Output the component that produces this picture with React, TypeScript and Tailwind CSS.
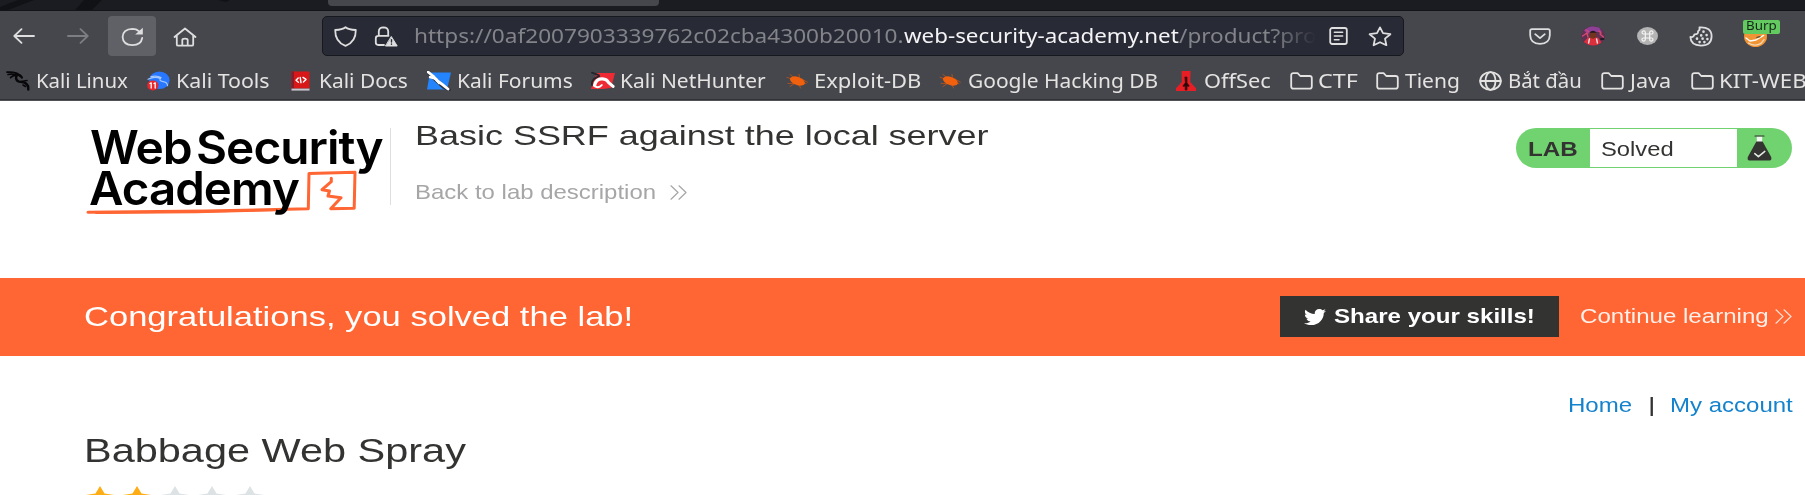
import { useLayoutEffect, useRef, useState } from "react";
import type { ReactNode } from "react";
import { FaTwitter } from "react-icons/fa";

/** Single-line text stretched horizontally to fill the width given by its class. */
function Fit({ className, children }: { className: string; children: ReactNode }) {
  const outer = useRef<HTMLSpanElement>(null);
  const inner = useRef<HTMLSpanElement>(null);
  const [k, setK] = useState(1);
  useLayoutEffect(() => {
    if (outer.current && inner.current && inner.current.offsetWidth) {
      setK(outer.current.getBoundingClientRect().width / inner.current.offsetWidth);
    }
  }, []);
  return (
    <span ref={outer} className={`block shrink-0 whitespace-nowrap ${className}`}>
      <span ref={inner} className="inline-block origin-left" style={{ transform: `scaleX(${k})` }}>
        {children}
      </span>
    </span>
  );
}

function Ico({ className, box, children }: { className: string; box: string; children: ReactNode }) {
  return (
    <svg
      className={`block shrink-0 ${className}`}
      viewBox={box}
      preserveAspectRatio="none"
      fill="none"
      stroke="currentColor"
      strokeWidth="1.8"
      strokeLinecap="round"
      strokeLinejoin="round"
    >
      {children}
    </svg>
  );
}

const Folder = () => (
  <Ico className="h-[18px] w-[23px]" box="0 0 23 18">
    <path d="M1.2 14.5V3.2Q1.2 1.2 3.4 1.2H7.6L10.3 4H19.6Q21.8 4 21.8 6V14.5Q21.8 16.7 19.6 16.7H3.4Q1.2 16.7 1.2 14.5Z" />
  </Ico>
);

const Globe = () => (
  <Ico className="h-5 w-[23px]" box="0 0 23 20">
    <ellipse cx="11.5" cy="10" rx="10.3" ry="8.8" />
    <ellipse cx="11.5" cy="10" rx="5" ry="8.8" />
    <path d="M1.2 10H21.8" />
  </Ico>
);

const Dragon = () => (
  <Ico className="h-5 w-6" box="0 0 24 20">
    <g stroke="#08080a">
      <path d="M1 1.2Q6 .6 11 2.4L14 5" strokeWidth="1.8" />
      <path d="M2 3.6Q6 2.4 10 4.2M4.5 6.6Q7 4 11 4.6" strokeWidth="1.6" />
      <path d="M10 3.4Q14.5 3.6 15.8 6.6M10.5 4.5Q9 9.4 13 10.6L17.5 11.4Q22.5 12.6 22.3 18.6" strokeWidth="2.4" />
      <path d="M19 12.4L22.6 15M15 10.4L21 9.6M17 14L19.5 15.5" strokeWidth="1.5" />
    </g>
  </Ico>
);

const Tools = () => (
  <Ico className="h-5 w-6" box="0 0 24 20">
    <ellipse cx="12.4" cy="9.2" rx="10.2" ry="8.8" fill="#2777ff" stroke="none" />
    <path d="M1 8.2Q8 5 13 7.4M4 5.6Q10 4.2 14 6.6Q11 10 16 10.6Q20 11 20.6 14.6" stroke="#a5c9ff" strokeWidth="1.2" />
    <ellipse cx="5.8" cy="14.4" rx="5.6" ry="5" fill="#e8262b" stroke="none" />
    <path d="M3 12.5L4.2 11.9V17M7 12.5L8.2 11.9V17" stroke="#fff" strokeWidth="1.3" />
  </Ico>
);

const Docs = () => (
  <Ico className="ml-px h-5 w-[19px]" box="0 0 19 20">
    <path d="M.5.5H18.5V17.5H.5Z" fill="#d81818" stroke="none" />
    <path d="M.5.5H3V17.5H.5Z" fill="#841c2b" stroke="none" />
    <path d="M.5 17.6H18.5V19.6H.5Z" fill="#c9c3cb" stroke="none" />
    <path d="M7.2 7L5 9.3L7.4 11.2M9.2 6.5L10 11.7M12 6.4L15 8.4L12.4 11" stroke="#fff" strokeWidth="1.4" />
  </Ico>
);

const Forums = () => (
  <Ico className="h-5 w-6" box="0 0 24 20">
    <path d="M3 1.6H24L20 18.6H0Z" fill="#2384fb" stroke="none" />
    <path d="M1 1.5L8 8.2L16.5 15.8L22 18.6" stroke="#2b2f38" strokeWidth="3.6" />
    <path d="M1 1L6 5L10 9.5L15.6 13.6L21 18" stroke="#fff" strokeWidth="2.8" />
    <path d="M3 6L9 7.8L12 12" stroke="#fff" strokeWidth="2.4" />
  </Ico>
);

const NetHunter = () => (
  <Ico className="h-5 w-6" box="0 0 24 20">
    <path d="M6 2H24L20 17L12 18H0L3 8Z" fill="#ee2b35" stroke="none" />
    <path d="M1 1.6L8 4.4M1 14Q0 8 8 5.4" stroke="#25262b" strokeWidth="1.8" />
    <path d="M3.6 14.4Q5 7.4 11.4 7.8Q16 8 17.4 11.4L22 15.4" stroke="#fff" strokeWidth="3.2" />
    <path d="M4 15.4Q8 17.6 10.8 14" stroke="#fff" strokeWidth="2" />
  </Ico>
);

const Bug = () => (
  <Ico className="h-[18px] w-6" box="0 0 24 18">
    <path d="M2 5.4L21 11.6M5 2.5L12 8M14 2.4L14.8 9M3 11.4H11M5 14.4L12 10M13 11L15.6 16M17 7L22.4 10.2" stroke="#a9501e" strokeWidth="1" />
    <ellipse cx="12.4" cy="9" rx="7.8" ry="4.1" transform="rotate(20 12.4 9)" fill="#f1600c" stroke="none" />
  </Ico>
);

const OffSec = () => (
  <Ico className="ml-px h-5 w-5" box="0 0 20 20">
    <path d="M5.6 0H14.6L14.2 11L20 17.2V20H0V17.2L5.8 11Z" fill="#e81e25" stroke="none" />
    <path d="M9.2 6H11V12L13 14.4V15.4L11 15V19H9.2V15L7.2 15.4V14.4L9.2 12Z" fill="#24080b" stroke="#4c0a0e" strokeWidth=".8" />
  </Ico>
);

const bookmarks = [
  { label: "Kali Linux", icon: <Dragon />, item: "w-[140.5px]", slot: "w-[30px]", text: "w-[92px]" },
  { label: "Kali Tools", icon: <Tools />, item: "w-[143px]", slot: "w-[29.5px]", text: "w-[94px]" },
  { label: "Kali Docs", icon: <Docs />, item: "w-[137px]", slot: "w-[29px]", text: "w-[89px]" },
  { label: "Kali Forums", icon: <Forums />, item: "w-[164px]", slot: "w-[30px]", text: "w-[116px]" },
  { label: "Kali NetHunter", icon: <NetHunter />, item: "w-[194px]", slot: "w-[29.5px]", text: "w-[146px]" },
  { label: "Exploit-DB", icon: <Bug />, item: "w-[153.5px]", slot: "w-[29px]", text: "w-[107px]" },
  { label: "Google Hacking DB", icon: <Bug />, item: "w-[236.5px]", slot: "w-[29.5px]", text: "w-[190px]" },
  { label: "OffSec", icon: <OffSec />, item: "w-[115px]", slot: "w-[29px]", text: "w-[67px]" },
  { label: "CTF", icon: <Folder />, item: "w-[86.5px]", slot: "w-[28px]", text: "w-[39.5px]" },
  { label: "Tieng", icon: <Folder />, item: "w-[102.5px]", slot: "w-[28.5px]", text: "w-[55px]" },
  { label: "Bắt đầu", icon: <Globe />, item: "w-[122px]", slot: "w-[29px]", text: "w-[74px]" },
  { label: "Java", icon: <Folder />, item: "w-[90px]", slot: "w-[29.5px]", text: "w-[41px]" },
  { label: "KIT-WEB", icon: <Folder />, item: "w-[125px]", slot: "w-[28px]", text: "w-[88px]" },
];

function TabStrip() {
  return (
    <div className="flex h-[11px] items-start border-b border-[#131418] bg-[#1b1c21]">
      <svg className="h-[10px] w-[328px]" viewBox="0 0 328 10" preserveAspectRatio="none">
        <path d="M0 10V7L18 0H34L8 10ZM75 10L84 0H102L92 10ZM218 0H230L226 2Z" fill="#111216" />
      </svg>
      <div className="h-[5.5px] w-[331px] rounded-b bg-[#45474d]" />
    </div>
  );
}

function Toolbar() {
  return (
    <div className="flex h-[50px] items-center bg-[#45474d] pl-[13px] text-[#dededf]">
      <Ico className="h-4 w-[22px]" box="0 0 22 16">
        <path d="M21 8H1.5M8.5 1.2L1.3 8L8.5 14.8" />
      </Ico>
      <Ico className="ml-8 h-4 w-[22px] text-[#7d7e83]" box="0 0 22 16">
        <path d="M1 8H20.5M13.5 1.2L20.7 8L13.5 14.8" />
      </Ico>
      <div className="ml-[19px] flex h-10 w-12 items-center justify-center rounded bg-[#606166]">
        <Ico className="mt-px h-5 w-[23px]" box="0 0 23 20">
          <path d="M17.7 4Q15.3 1.8 11.5 1.8Q1.8 2.2 1.6 10Q2 18 11.5 18.2Q20 18 21.2 11" />
          <path d="M21.8.8V7.6H14.2Z" fill="currentColor" stroke="none" />
        </Ico>
      </div>
      <Ico className="mt-px ml-[17px] h-5 w-6" box="0 0 24 20">
        <path d="M1.5 10L12 1.5L22.5 10M3.8 8.4V17.4Q3.8 18.7 5.2 18.7H18.8Q20.2 18.7 20.2 17.4V8.4M9.3 18.5V13Q9.3 11.6 12 11.6T14.7 13V18.5" />
      </Ico>
      <div className="ml-[125px] flex h-10 w-[1082px] shrink-0 items-center rounded-[5px] border border-[#17181e] bg-[#282a36] pl-[11px] font-['Noto_Sans',sans-serif] text-[19.6px] text-[#83848a]">
        <Ico className="h-[21px] w-[23px] text-[#dededf]" box="0 0 23 21">
          <path d="M11.5 1.2Q14.5 3.6 21.8 4Q22 16 11.5 19.8Q1 16 1.2 4Q8.5 3.6 11.5 1.2Z" />
        </Ico>
        <Ico className="ml-[17px] h-[21px] w-6 text-[#dededf]" box="0 0 24 21">
          <path d="M10 19H4.4Q1.8 19 1.8 16.6V12.2Q1.8 9.8 4.4 9.8H14.5M4.8 9.6V5.4Q5 1.5 9.4 1.4Q14 1.5 14.2 5.4V9.6" />
          <path d="M17.5 10.8L23.2 20H11.8Z" fill="currentColor" stroke="currentColor" strokeWidth="1" />
          <path d="M17.5 13.6V16M17.5 18V18.2" stroke="#282a36" strokeWidth="1.4" />
        </Ico>
        <div className="ml-[15.5px] flex w-[902px] items-center overflow-hidden [mask-image:linear-gradient(to_right,black_860px,transparent_902px)]">
          <Fit className="w-[490px]">https://0af2007903339762c02cba4300b20010.</Fit>
          <Fit className="w-[275px] text-[#f4f4f6]">web-security-academy.net</Fit>
          <Fit className="w-[138px]">/product?pro</Fit>
        </div>
        <Ico className="ml-[13px] h-[18px] w-[19px] text-[#dededf]" box="0 0 19 18">
          <rect x="1.2" y="1" width="16.6" height="16" rx="2" />
          <path d="M5.4 5.2H13.6M5.4 9H13.6M5.4 12.8H10" strokeWidth="1.6" />
        </Ico>
        <Ico className="ml-5 h-[21px] w-6 text-[#dededf]" box="0 0 24 21">
          <path d="M12 1.4L15 7.2L22.4 8.2L17 12.6L18.4 19.2L12 16.2L5.6 19.2L7 12.6L1.6 8.2L9 7.2Z" />
        </Ico>
      </div>
      <Ico className="ml-[125px] h-[17px] w-[22px]" box="0 0 22 18">
        <path d="M3 1.2H19Q20.8 1.2 20.8 3V7.6Q20.6 16.4 11 16.8Q1.4 16.4 1.2 7.6V3Q1.2 1.2 3 1.2ZM6.2 6.6L11 10.8L15.8 6.6" />
      </Ico>
      <Ico className="ml-[30px] h-5 w-6" box="0 0 24 20">
        <ellipse cx="12" cy="10" rx="12" ry="10" fill="#5f3153" stroke="none" />
        <path d="M3 4.5Q8 0 12 .6L18 1.6L21 6L15 6L6 8Z" fill="#8d4096" stroke="none" />
        <path d="M1.6 10L6 7L7 11M19 8L22.4 11M5 4L8 6M18 5L20 7" stroke="#d8486f" strokeWidth="1.4" />
        <path d="M2.6 16L7 11.6H17L20.6 16.4Q12 23 2.6 16Z" fill="#d9303c" stroke="none" />
        <path d="M8.8 6H15.2V11Q12 14.4 8.8 11Z" fill="#71351f" stroke="none" />
        <path d="M8.2 6.8Q12 2.6 15.8 6.8Z" fill="#1f1722" stroke="none" />
        <path d="M8.4 13L7.6 17M15.6 13L16.4 17" stroke="#f4dce2" strokeWidth="1.4" />
        <path d="M20 13L22.4 13" stroke="#241c28" strokeWidth="2" />
      </Ico>
      <Ico className="ml-8 h-[18px] w-[21px]" box="0 0 21 18">
        <ellipse cx="10.5" cy="9" rx="10.5" ry="9" fill="#b4b4b5" stroke="none" />
        <path d="M8.3 7H12.7V11H8.3ZM8.3 7H6.6Q5 6.8 5 5.4T6.6 3.8T8.3 5.4ZM12.7 7V5.4Q12.9 3.8 14.4 3.8T16 5.4T14.4 7ZM12.7 11H14.4Q16 11.2 16 12.6T14.4 14.2T12.7 12.6ZM8.3 11V12.6Q8.1 14.2 6.6 14.2T5 12.6T6.6 11Z" stroke="#f5f5f5" strokeWidth="1.2" />
      </Ico>
      <Ico className="ml-[31px] h-[21px] w-6" box="0 0 24 21">
        <path d="M10.4 1.4Q22.6.6 22.6 10.4Q22.4 19.4 12 19.6Q1.6 19.2 1.4 11Q4.8 11.6 5.4 8.4Q9.6 8.6 9 5.2Q11.4 4 10.4 1.4Z" />
        <path d="M14.5 5.6V5.7M12.2 9.4V9.5M17.6 9V9.1M8 12.6V12.7M13.6 12.6V12.7M18.4 13V13.1M10.6 16V16.1M15.4 16V16.1" strokeWidth="2.6" />
      </Ico>
      <div className="relative ml-[30px] h-[30px] w-[37px] shrink-0">
        <Ico className="mt-[5px] ml-[1px] h-[21px] w-[23px]" box="0 0 23 21">
          <ellipse cx="11.5" cy="10.5" rx="11.5" ry="10.5" fill="#f09435" stroke="none" />
          <path d="M2 12L6 15L12 14L19.6 9.4" stroke="#fff" strokeWidth="1.4" />
          <path d="M4.4 17Q11 21 17 17.4L20 13.6" stroke="#f5d9bb" strokeWidth="1.3" />
          <path d="M13 11.4L16 10.6" stroke="#6e4a2b" strokeWidth="1.4" />
        </Ico>
        <div className="absolute top-[-1.5px] left-0 flex h-[14px] w-[36.5px] items-center justify-center rounded-[2px] bg-[#63ca5f] font-['Noto_Sans',sans-serif] text-[12.5px] leading-none text-[#16251a]">
          <Fit className="w-[31px]">Burp</Fit>
        </div>
      </div>
    </div>
  );
}

function BookmarksBar() {
  return (
    <div className="flex h-10 overflow-hidden border-b border-[#515257] bg-[#45474d] shadow-[inset_0_-1px_0_#303136] pl-[6px] font-['Noto_Sans',sans-serif] text-[19.5px] text-[#e4e3e1]">
      {bookmarks.map((b) => (
        <div key={b.label} className={`flex h-[39px] shrink-0 items-center ${b.item}`}>
          <span className={`shrink-0 ${b.slot}`}>{b.icon}</span>
          <Fit className={b.text}>{b.label}</Fit>
        </div>
      ))}
    </div>
  );
}

function Logo() {
  return (
    <div className="relative h-[92px] w-[305px] shrink-0 font-['Inter',sans-serif] text-[46.5px] leading-[42px] font-semibold text-black">
      <svg className="absolute top-0 left-0 h-[92px] w-[305px]" viewBox="0 0 305 92" fill="none" stroke="#ff6633" strokeLinejoin="round" strokeLinecap="round">
        <path d="M2 87.2L120 86L222.3 83.7L223 48.4L269 47.3L268.2 83.3L244.7 83.7L255 72.7L242 71L243.5 66L236 64.7L245.3 56.7V53.3" strokeWidth="3" />
        <path d="M10 88L110 87.4L200 85" strokeWidth="1.8" />
      </svg>
      <div className="relative flex pt-[1px] pl-[4px]">
        <Fit className="w-[102px] tracking-[-0.02em]">Web</Fit>
        <Fit className="ml-[4px] w-[187px] tracking-[-0.02em]">Security</Fit>
      </div>
      <div className="relative mt-[-1px] flex pl-[3px]">
        <Fit className="w-[210px] tracking-[-0.02em]">Academy</Fit>
      </div>
    </div>
  );
}

const Chevrons = ({ className }: { className: string }) => (
  <Ico className={`h-[15px] w-[17px] ${className}`} box="0 0 17 15">
    <path d="M1 .8L8 7.5L1 14.2M9 .8L16 7.5L9 14.2" strokeWidth="1.2" />
  </Ico>
);

function LabHeader() {
  return (
    <header className="flex h-[177px] items-start pl-[86px]">
      <div className="pt-[24px]">
        <Logo />
      </div>
      <div className="mt-[27px] -ml-[1px] h-[77px] w-px bg-[#dfdfdf]" />
      <div className="ml-[24px] pt-[14px]">
        <Fit className="w-[574px] text-[28.5px] leading-10 text-[#333332]">Basic SSRF against the local server</Fit>
        <div className="mt-[23px] flex items-center text-[20.3px] leading-[28px] text-[#a6a6a8]">
          <Fit className="w-[241px]">Back to lab description</Fit>
          <Chevrons className="ml-[14px]" />
        </div>
      </div>
      <div className="mt-[27px] mr-[13px] ml-auto flex h-10 w-[276px] items-center overflow-hidden rounded-[20px] bg-[#71d36f] text-[#333332]">
        <div className="flex w-[74px] justify-center pt-[3px]">
          <Fit className="w-[49.5px] text-[20.5px] font-bold">LAB</Fit>
        </div>
        <div className="flex h-[38px] w-[147px] items-center bg-white pt-[2px] pl-[11px]">
          <Fit className="w-[73px] text-[20.5px]">Solved</Fit>
        </div>
        <Ico className="ml-[9.5px] h-[26px] w-[25px]" box="0 0 25 26">
          <path d="M9.8 1.4H15.2V8H9.8Z" fill="#f4f6f4" stroke="none" />
          <path d="M8 1H17" strokeWidth="1.2" />
          <path d="M9.4 6.6H15.6L24.2 22Q25 25.4 22.6 25.4H2.4Q0 25.4 .8 22Z" fill="#333332" stroke="none" />
          <path d="M7.8 18.6L11.4 21.6L17.8 16.4" stroke="#e4ebe4" strokeWidth="1.5" />
        </Ico>
      </div>
    </header>
  );
}

function SolvedBanner() {
  return (
    <section className="flex h-[77.5px] items-center bg-[#ff6633] pr-[13px] pl-[84px] text-white">
      <Fit className="w-[549px] text-[28.5px]">Congratulations, you solved the lab!</Fit>
      <div className="ml-auto flex h-[41px] w-[279px] items-center bg-[#333332] pl-6">
        <FaTwitter className="h-[20px] w-[22px]" preserveAspectRatio="none" />
        <Fit className="ml-[8px] w-[201px] text-[20.5px] font-bold">Share your skills!</Fit>
      </div>
      <Fit className="ml-[21.5px] w-[189px] text-[20.5px] text-[#fff0ea]">Continue learning</Fit>
      <Chevrons className="ml-[6px] text-[#ffe0d4]" />
    </section>
  );
}

function StarRow() {
  return (
    <div className="flex gap-[5.5px] pl-[83.5px]">
      {[true, true, false, false, false].map((on, i) => (
        <svg key={i} className={`h-[30px] w-8 shrink-0 ${on ? "text-[#ffad14]" : "text-[#dde2e4]"}`} viewBox="0 0 32 30" preserveAspectRatio="none">
          <path d="M16 0L20.5 7.5L32 9.3L23.6 17L25.6 28L16 23L6.4 28L8.4 17L0 9.3L11.5 7.5Z" fill="currentColor" />
        </svg>
      ))}
    </div>
  );
}

export default function App() {
  return (
    <div className="h-[495px] w-[1805px] overflow-hidden bg-white font-['Liberation_Sans',sans-serif]">
      <TabStrip />
      <Toolbar />
      <BookmarksBar />
      <LabHeader />
      <SolvedBanner />
      <nav className="mt-[34.5px] flex h-[30px] items-center justify-end pr-[12.5px] text-[20.5px] text-[#1482cc]">
        <Fit className="w-[64.5px]">Home</Fit>
        <Fit className="mx-[15px] w-[7px] text-[#333332]">|</Fit>
        <Fit className="w-[123px]">My account</Fit>
      </nav>
      <main className="pt-[11px]">
        <div className="pl-[84px]">
          <Fit className="w-[382px] text-[33px] leading-[40px] text-[#333332]">Babbage Web Spray</Fit>
        </div>
        <div className="mt-[14.5px]">
          <StarRow />
        </div>
      </main>
    </div>
  );
}
